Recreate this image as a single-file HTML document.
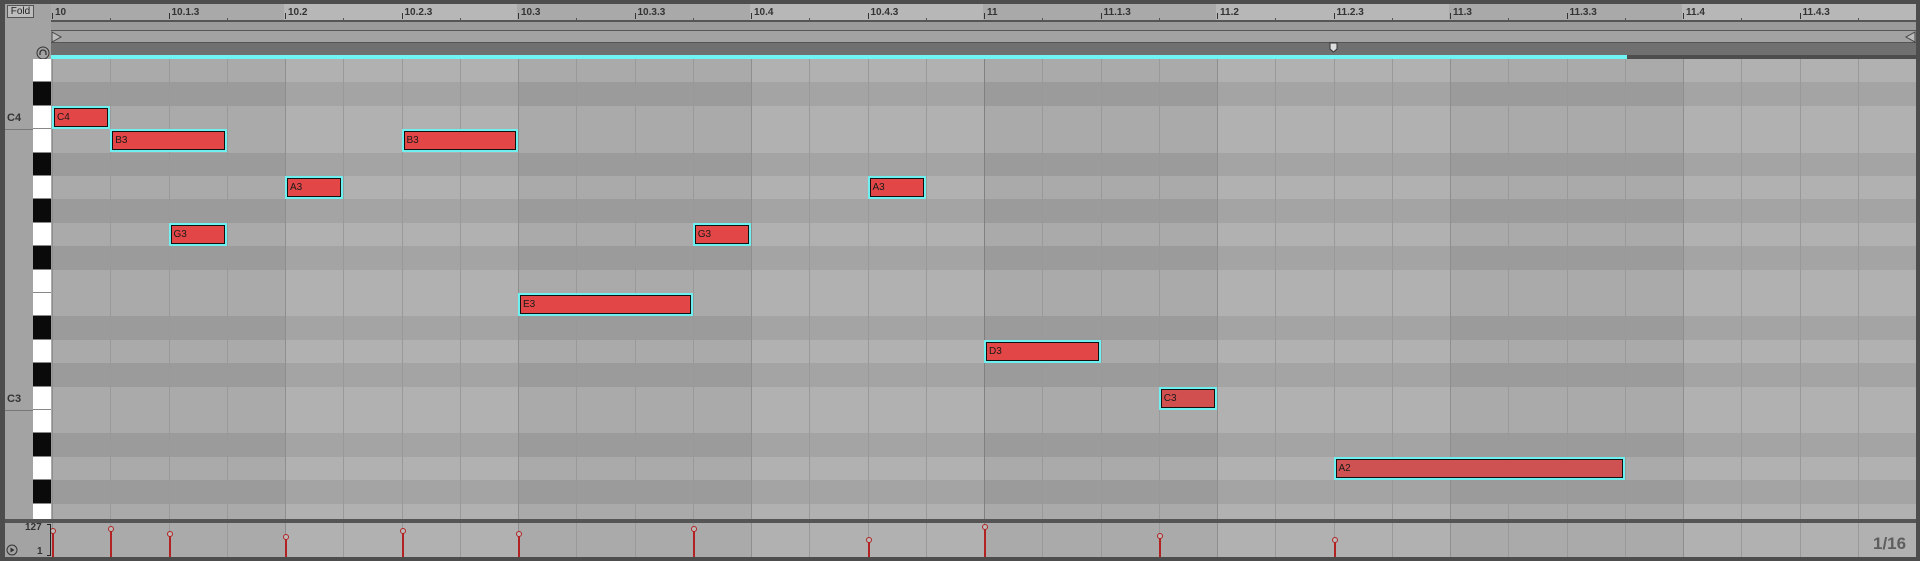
<!DOCTYPE html>
<html><head><meta charset="utf-8"><style>
*{margin:0;padding:0;box-sizing:border-box}
body{width:1920px;height:561px;background:#4d4d4d;position:relative;overflow:hidden;font-family:"Liberation Sans",sans-serif}
.a{position:absolute}
.lbl{position:absolute;font-size:11px;color:#222}
.note{position:absolute;height:23px;border:2px solid #6ff0f0;}
.note div{width:100%;height:100%;border:1px solid #111;background:#e34646;font-size:10px;line-height:17px;padding-left:2px;color:#1a1a1a}
</style></head><body>
<div class="a" style="left:5px;top:4px;width:46px;height:515px;background:#a3a3a3"></div>
<div class="a" style="left:7px;top:5px;width:27px;height:13px;border:1px solid #555;background:#bdbdbd;font-size:10px;line-height:11px;text-align:center;color:#222">Fold</div>
<div class="a" style="left:51px;top:4px;width:1865px;height:17px;background:linear-gradient(90deg,#a9a9a9 0 233px,#b7b7b7 233px 466px,#a9a9a9 466px 699px,#b7b7b7 699px 932px,#a9a9a9 932px 1165px,#b7b7b7 1165px 1398px,#a9a9a9 1398px 1631px,#b7b7b7 1631px)"></div>
<div class="a" style="left:51px;top:20px;width:1865px;height:2px;background:#555"></div>
<div class="a" style="left:51px;top:22px;width:1865px;height:8px;background:#9b9b9b"></div>
<div class="a" style="left:51px;top:30px;width:1865px;height:1px;background:#555"></div>
<div class="a" style="left:51px;top:31px;width:1865px;height:11px;background:#a2a2a2"></div>
<div class="a" style="left:51px;top:42px;width:1865px;height:1px;background:#555"></div>
<div class="a" style="left:51px;top:43px;width:1865px;height:12px;background:#707070"></div>
<div class="a" style="left:51px;top:55px;width:1576px;height:4px;background:#6ff3f3"></div>
<svg class="a" style="left:51px;top:31px" width="12" height="12"><path d="M1 1 L10 6 L1 11 Z" fill="#bbb" stroke="#444"/></svg>
<svg class="a" style="left:1905px;top:31px" width="11" height="12"><path d="M10 1 L1 6 L10 11 Z" fill="#bbb" stroke="#444"/></svg>
<svg class="a" style="left:1329px;top:42px" width="10" height="12"><path d="M1 1 H8 V7 L4.5 10 L1 7 Z" fill="#ddd" stroke="#333"/></svg>
<svg class="a" style="left:36px;top:46px" width="14" height="14"><circle cx="7" cy="7" r="6" fill="none" stroke="#333"/><path d="M4 9 V7 A3 3 0 0 1 10 7 V9" fill="none" stroke="#333" stroke-width="1.3"/></svg>
<div id="ruler"></div>
<div id="grid" class="a" style="left:51px;top:59px;width:1865px;height:460px;overflow:hidden"></div>
<div id="keys"></div>
<div class="lbl" style="left:7px;top:112px;font-weight:bold;color:#333">C4</div>
<div class="a" style="left:5px;top:129px;width:28px;height:1px;background:#777"></div>
<div class="lbl" style="left:7px;top:393px;font-weight:bold;color:#333">C3</div>
<div class="a" style="left:5px;top:410px;width:28px;height:1px;background:#777"></div>
<div class="a" style="left:5px;top:519px;width:1911px;height:4px;background:#555"></div>
<div class="a" style="left:5px;top:523px;width:46px;height:34px;background:#a3a3a3"></div>
<div id="vel" class="a" style="left:51px;top:523px;width:1865px;height:34px;overflow:hidden"></div>
<div class="lbl" style="left:25px;top:522px;font-size:10px;font-weight:bold;color:#333">127</div>
<div class="lbl" style="left:37px;top:546px;font-size:10px;font-weight:bold;color:#333">1</div>
<div class="a" style="left:47px;top:524px;width:4px;height:32px;border:1px solid #222;border-left:none"></div>
<svg class="a" style="left:6px;top:544px" width="12" height="12"><circle cx="6" cy="6" r="5" fill="none" stroke="#333"/><path d="M4.5 3.5 L8.5 6 L4.5 8.5Z" fill="#333"/></svg>
<div class="a" style="left:1873px;top:534px;font-size:17px;font-weight:bold;color:#5e5e5e">1/16</div>
<script>
const S=58.25,O=52;
let h='';
const labs=['10','10.1.3','10.2','10.2.3','10.3','10.3.3','10.4','10.4.3','11','11.1.3','11.2','11.2.3','11.3','11.3.3','11.4','11.4.3'];
labs.forEach((l,i)=>{const x=O+i*2*S;h+=`<div class="a" style="left:${x}px;top:13px;width:1px;height:6px;background:#333"></div><div class="lbl" style="left:${x+3}px;top:7px;font-size:10px;font-weight:bold;color:#333">${l}</div>`;h+=`<div class="a" style="left:${x+S}px;top:18px;width:1px;height:2px;background:#555"></div>`});
document.getElementById('ruler').innerHTML=h;
const black=[0,1,0,0,1,0,1,0,1,0,0,1,0,1,0,0,1,0,1,0];
let g='',k='';const R=23.4;
for(let r=0;r<20;r++){const y=r*R;g+=`<div class="a" style="left:0;top:${y}px;width:1865px;height:${R+1}px;background:${black[r]?'#9b9b9b':'#aaaaaa'}"></div>`;
k+=`<div class="a" style="left:33px;top:${59+y}px;width:18px;height:${R}px;background:${black[r]?'#0a0a0a':'#fff'};border-bottom:1px solid #888"></div>`;}
for(let b=1;b<8;b+=2){g+=`<div class="a" style="left:${b*233+1}px;top:0;width:233px;height:460px;background:rgba(255,255,255,0.09)"></div>`}
for(let i=0;i<33;i++){const x=O+i*S-51;g+=`<div class="a" style="left:${x}px;top:0;width:1px;height:460px;background:${i==16?'#808080':(i%4==0?'#8e8e8e':'#999')}"></div>`}
const notes=[['C4',0,2,1],['B3',1,3,2],['B3',6,3,2],['A3',4,5,1],['A3',14,5,1],['G3',2,7,1],['G3',11,7,1],['E3',8,10,3],['D3',16,12,2],['C3',19,14,1,'#d24f4f'],['A2',22,17,5,'#cf5252']];
notes.forEach(n=>{const x=O+n[1]*S-51;g+=`<div class="note" style="left:${x}px;top:${n[2]*R}px;width:${n[3]*S}px"><div style="background:${n[4]||'#e34646'}">${n[0]}</div></div>`});
document.getElementById('grid').innerHTML=g;document.getElementById('keys').innerHTML=k;
let v='<div class="a" style="left:0;top:0;width:1865px;height:34px;background:#aaa"></div>';
for(let b=1;b<8;b+=2){v+=`<div class="a" style="left:${b*233+1}px;top:0;width:233px;height:34px;background:rgba(255,255,255,0.09)"></div>`}
for(let i=0;i<33;i++){const x=O+i*S-51;v+=`<div class="a" style="left:${x}px;top:0;width:1px;height:34px;background:${i%4==0?'#8e8e8e':'#999'}"></div>`}
const st=[[0,531],[1,529],[2,534],[4,537],[6,531],[8,534],[11,529],[14,540],[16,527],[19,536],[22,540]];
st.forEach(s=>{const x=O+s[0]*S-51,t=s[1]-523;v+=`<div class="a" style="left:${x}px;top:${t}px;width:2px;height:${34-t}px;background:#b22222"></div><div class="a" style="left:${x-2}px;top:${t-3}px;width:6px;height:6px;border:1.5px solid #b22222;border-radius:50%;background:#bbb"></div>`});
document.getElementById('vel').innerHTML=v;
</script>
</body></html>
